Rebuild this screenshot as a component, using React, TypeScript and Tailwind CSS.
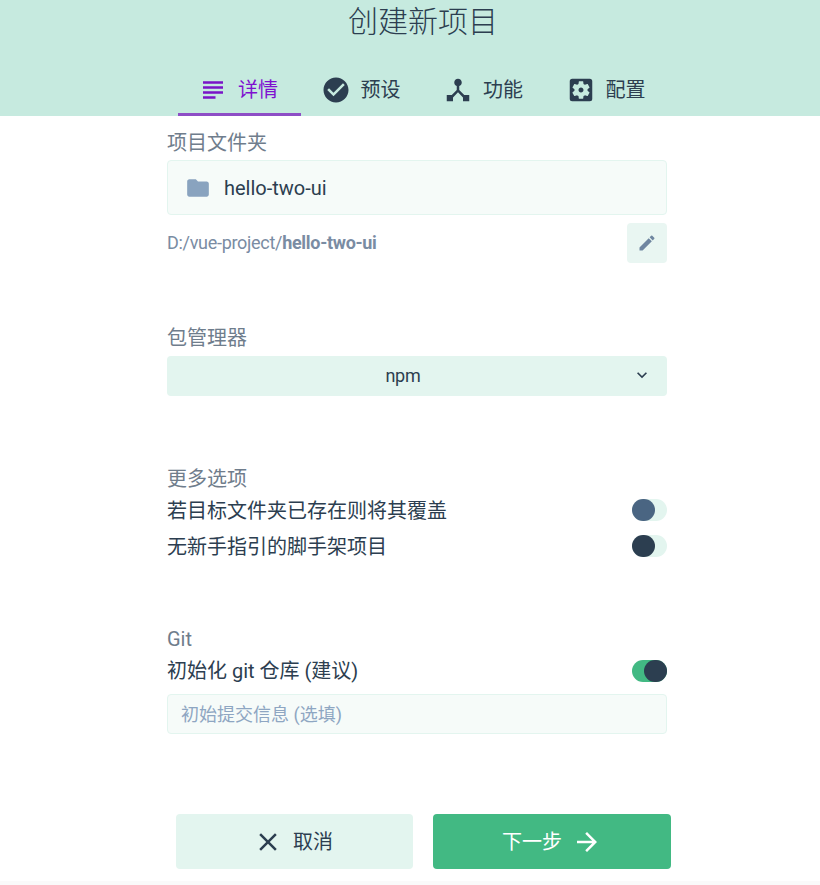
import {
  MdArrowForward,
  MdCheckCircle,
  MdClose,
  MdDeviceHub,
  MdEdit,
  MdFolder,
  MdKeyboardArrowDown,
  MdSettingsApplications,
  MdSubject,
} from "react-icons/md";

const tabs = [
  { label: "详情", icon: MdSubject, active: true },
  { label: "预设", icon: MdCheckCircle, active: false },
  { label: "功能", icon: MdDeviceHub, active: false },
  { label: "配置", icon: MdSettingsApplications, active: false },
];

function Toggle({ knob, on, className = "" }: { knob: string; on?: boolean; className?: string }) {
  return (
    <div className={`flex h-[22px] w-[35px] rounded-full ${on ? "justify-end bg-[#42b983]" : "bg-[#e3f5ef]"} ${className}`}>
      <div className={`h-[22px] w-[23px] rounded-full ${knob}`} />
    </div>
  );
}

export default function App() {
  return (
    <div
      className="flex h-[885px] flex-col bg-white text-[#2c3e50]"
      style={{ fontFamily: '"Roboto", "Noto Sans CJK SC", sans-serif' }}
    >
      <header className="h-[116px] shrink-0 bg-[#c6eadf]">
        <h1 className="ml-[178px] w-[490px] pt-[3px] text-center text-[30px] leading-[38px] font-light">创建新项目</h1>
        <nav className="mt-[32px] ml-[178px] flex h-[43px] w-[490px]">
          {tabs.map((tab) => (
            <div
              key={tab.label}
              className={`flex flex-1 items-center gap-[10px] pl-[20px] text-[20px] whitespace-nowrap ${
                tab.active ? "border-b-[3px] border-[#8e4ec6] pb-[7px] text-[#7f10d0]" : "pb-[10px]"
              }`}
            >
              <tab.icon className={`h-[30px] w-[30px] shrink-0 ${tab.active ? "text-[#7a14c8]" : "text-[#2c3e50]"}`} />
              <span>{tab.label}</span>
            </div>
          ))}
        </nav>
      </header>

      <main className="ml-[167px] w-[500px] flex-1">
        <div className="mt-[13px] text-[20px] leading-[28px] text-[#6f7d8c]">项目文件夹</div>
        <div className="mt-[3px] flex h-[55px] items-center rounded-[4px] border border-[#e3f5ef] bg-[#f6fbf9] pl-[17px] text-[20px]">
          <MdFolder className="mr-[13px] h-[26px] w-[26px] text-[#89a3bf]" />
          hello-two-ui
        </div>
        <div className="mt-[8px] flex items-center justify-between">
          <div className="pb-[2px] text-[18px] tracking-[-0.3px] text-[#7a8ca3]">
            D:/vue-project/<span className="font-bold">hello-two-ui</span>
          </div>
          <button className="flex h-[40px] w-[40px] items-center justify-center rounded-[4px] bg-[#e9f6f2]">
            <MdEdit className="h-[20px] w-[20px] text-[#6f86a0]" />
          </button>
        </div>

        <div className="mt-[61px] text-[20px] leading-[28px] text-[#6f7d8c]">包管理器</div>
        <div className="relative mt-[4px] flex h-[40px] items-center justify-center rounded-[4px] bg-[#e3f5ef] pr-[28px] pb-[2px] text-[18px] tracking-[-0.2px]">
          npm
          <MdKeyboardArrowDown className="absolute right-[15px] h-[20px] w-[20px]" />
        </div>

        <div className="mt-[69px] text-[20px] leading-[28px] text-[#6f7d8c]">更多选项</div>
        <div className="flex h-[36px] items-center justify-between text-[20px]">
          若目标文件夹已存在则将其覆盖
          <Toggle knob="bg-[#4a6582]" className="mb-[2px]" />
        </div>
        <div className="flex h-[36px] items-center justify-between text-[20px]">
          无新手指引的脚手架项目
          <Toggle knob="bg-[#2c3e50]" className="mb-[2px]" />
        </div>

        <div className="mt-[60px] text-[20px] leading-[28px] text-[#6f7d8c]">Git</div>
        <div className="flex h-[36px] items-center justify-between text-[20px]">
          初始化 git 仓库 (建议)
          <Toggle knob="bg-[#2c3e50]" on />
        </div>
        <div className="mt-[5px] flex h-[40px] items-center rounded-[4px] border border-[#e3f5ef] bg-[#f6fbf9] pl-[13px] text-[18px] text-[#8ea6c2]">
          初始提交信息 (选填)
        </div>
      </main>

      <footer className="flex h-[67px] shrink-0 items-start gap-[20px] pl-[176px]">
        <button className="flex h-[55px] w-[237px] items-center justify-center gap-[10px] rounded-[4px] bg-[#e3f5ef] pr-[3px] text-[20px]">
          <MdClose className="h-[30px] w-[30px]" />
          取消
        </button>
        <button className="flex h-[55px] w-[238px] items-center justify-center gap-[10px] rounded-[4px] bg-[#42b983] text-[20px] text-white">
          下一步
          <MdArrowForward className="h-[30px] w-[30px]" />
        </button>
      </footer>
      <div className="h-[4px] shrink-0 bg-[#fafafa]" />
    </div>
  );
}
